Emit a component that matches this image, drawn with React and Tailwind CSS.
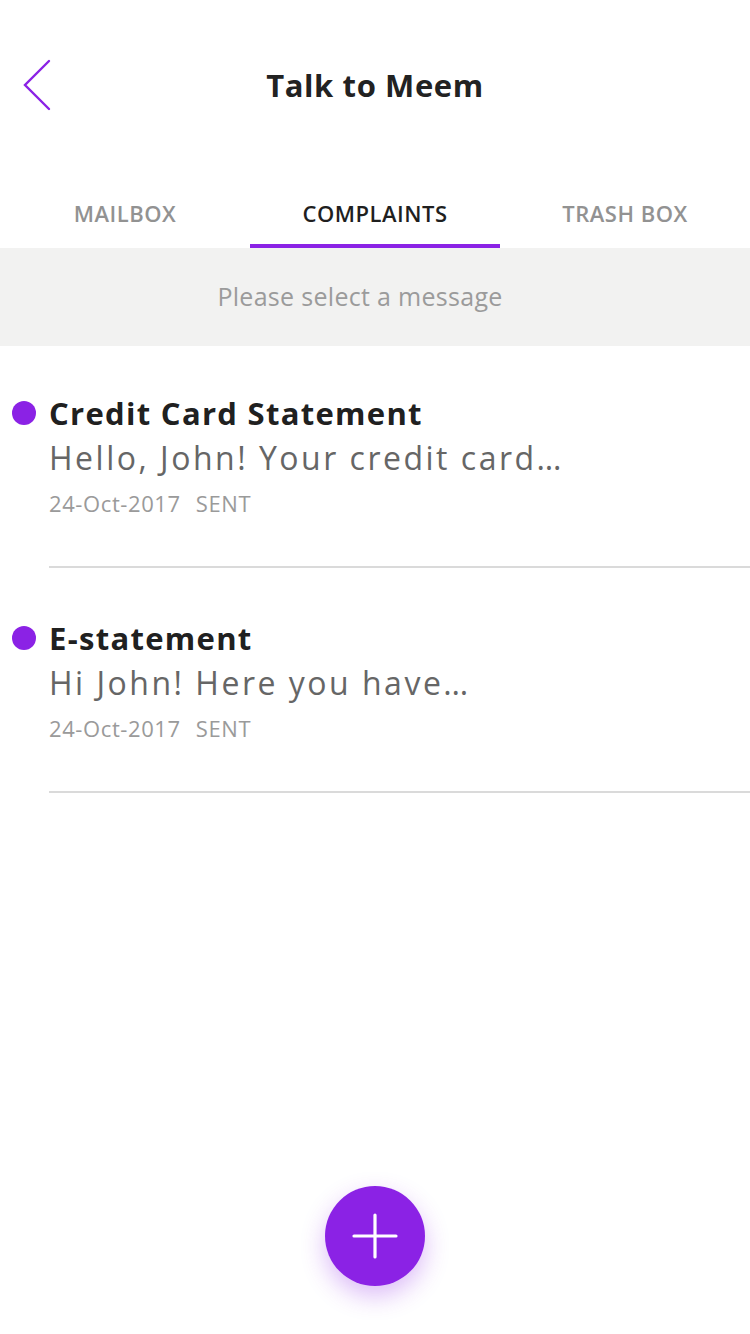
const PURPLE = 'bg-[#8b22e5]'

const MESSAGES = [
  { title: 'Credit Card Statement', preview: 'Hello, John! Your credit card…', date: '24-Oct-2017', status: 'SENT' },
  { title: 'E-statement', preview: 'Hi John! Here you have…', date: '24-Oct-2017', status: 'SENT' },
]

function BackChevron() {
  return (
    <svg width="30" height="52" viewBox="0 0 30 52" fill="none" aria-hidden>
      <path d="M27 2 L3 26 L27 50" stroke="#8b22e5" strokeWidth="2.4" strokeLinecap="round" strokeLinejoin="miter" />
    </svg>
  )
}

function PlusIcon() {
  return (
    <svg width="48" height="48" viewBox="0 0 48 48" fill="none" aria-hidden>
      <path d="M24 3 V45 M3 24 H45" stroke="white" strokeWidth="3.2" strokeLinecap="round" />
    </svg>
  )
}

function Tab({ label, active }) {
  return (
    <div className="flex h-[68px] flex-1 flex-col">
      <div
        className={`flex flex-1 items-center justify-center pt-[2px] text-[22px] font-semibold tracking-[0.5px] ${
          active ? 'text-[#1f1f1f]' : 'text-[#929292]'
        }`}
      >
        {label}
      </div>
      <div className={`h-[4px] ${active ? PURPLE : ''}`} />
    </div>
  )
}

function MessageItem({ title, preview, date, status }) {
  return (
    <li className="pt-[48px] first:pt-[45px]">
      <div className="flex h-[44px] items-center pl-[12px]">
        <span className={`h-[24px] w-[24px] shrink-0 rounded-full ${PURPLE}`} />
        <span className="ml-[13px] text-[31px] font-bold tracking-[1.3px] text-[#202020]">{title}</span>
      </div>
      <p className="flex h-[46px] items-center pl-[49px] text-[32px] tracking-[2.5px] text-[#666666]">{preview}</p>
      <p className="flex h-[44px] items-center pl-[49px] text-[22px] tracking-[0.6px] text-[#9a9a9a]">
        {date}
        <span className="ml-[15px]">{status}</span>
      </p>
      <div className="ml-[49px] mt-[41px] h-[2px] bg-[#dadada]" />
    </li>
  )
}

export default function App() {
  return (
    <div className="flex min-h-[1334px] flex-col bg-white font-['Open_Sans',sans-serif]">
      <header className="relative mt-[40px] flex h-[90px] items-center justify-center">
        <button className="absolute left-[22px] top-[19px]">
          <BackChevron />
        </button>
        <h1 className="text-[31px] font-bold tracking-[0.6px] text-[#222222]">Talk to Meem</h1>
      </header>

      <nav className="mt-[50px] flex">
        <Tab label="MAILBOX" />
        <Tab label="COMPLAINTS" active />
        <Tab label="TRASH BOX" />
      </nav>

      <div className="flex h-[98px] items-center justify-center bg-[#f2f2f1] pr-[30px] text-[25px] tracking-[0.3px] text-[#9b9b9b]">
        Please select a message
      </div>

      <ul className="flex-1">
        {MESSAGES.map((m) => (
          <MessageItem key={m.title} {...m} />
        ))}
      </ul>

      <div className="flex justify-center pb-[48px]">
        <button
          className={`flex h-[100px] w-[100px] items-center justify-center rounded-full ${PURPLE} shadow-[0_10px_24px_rgba(139,34,229,0.3)]`}
        >
          <PlusIcon />
        </button>
      </div>
    </div>
  )
}
